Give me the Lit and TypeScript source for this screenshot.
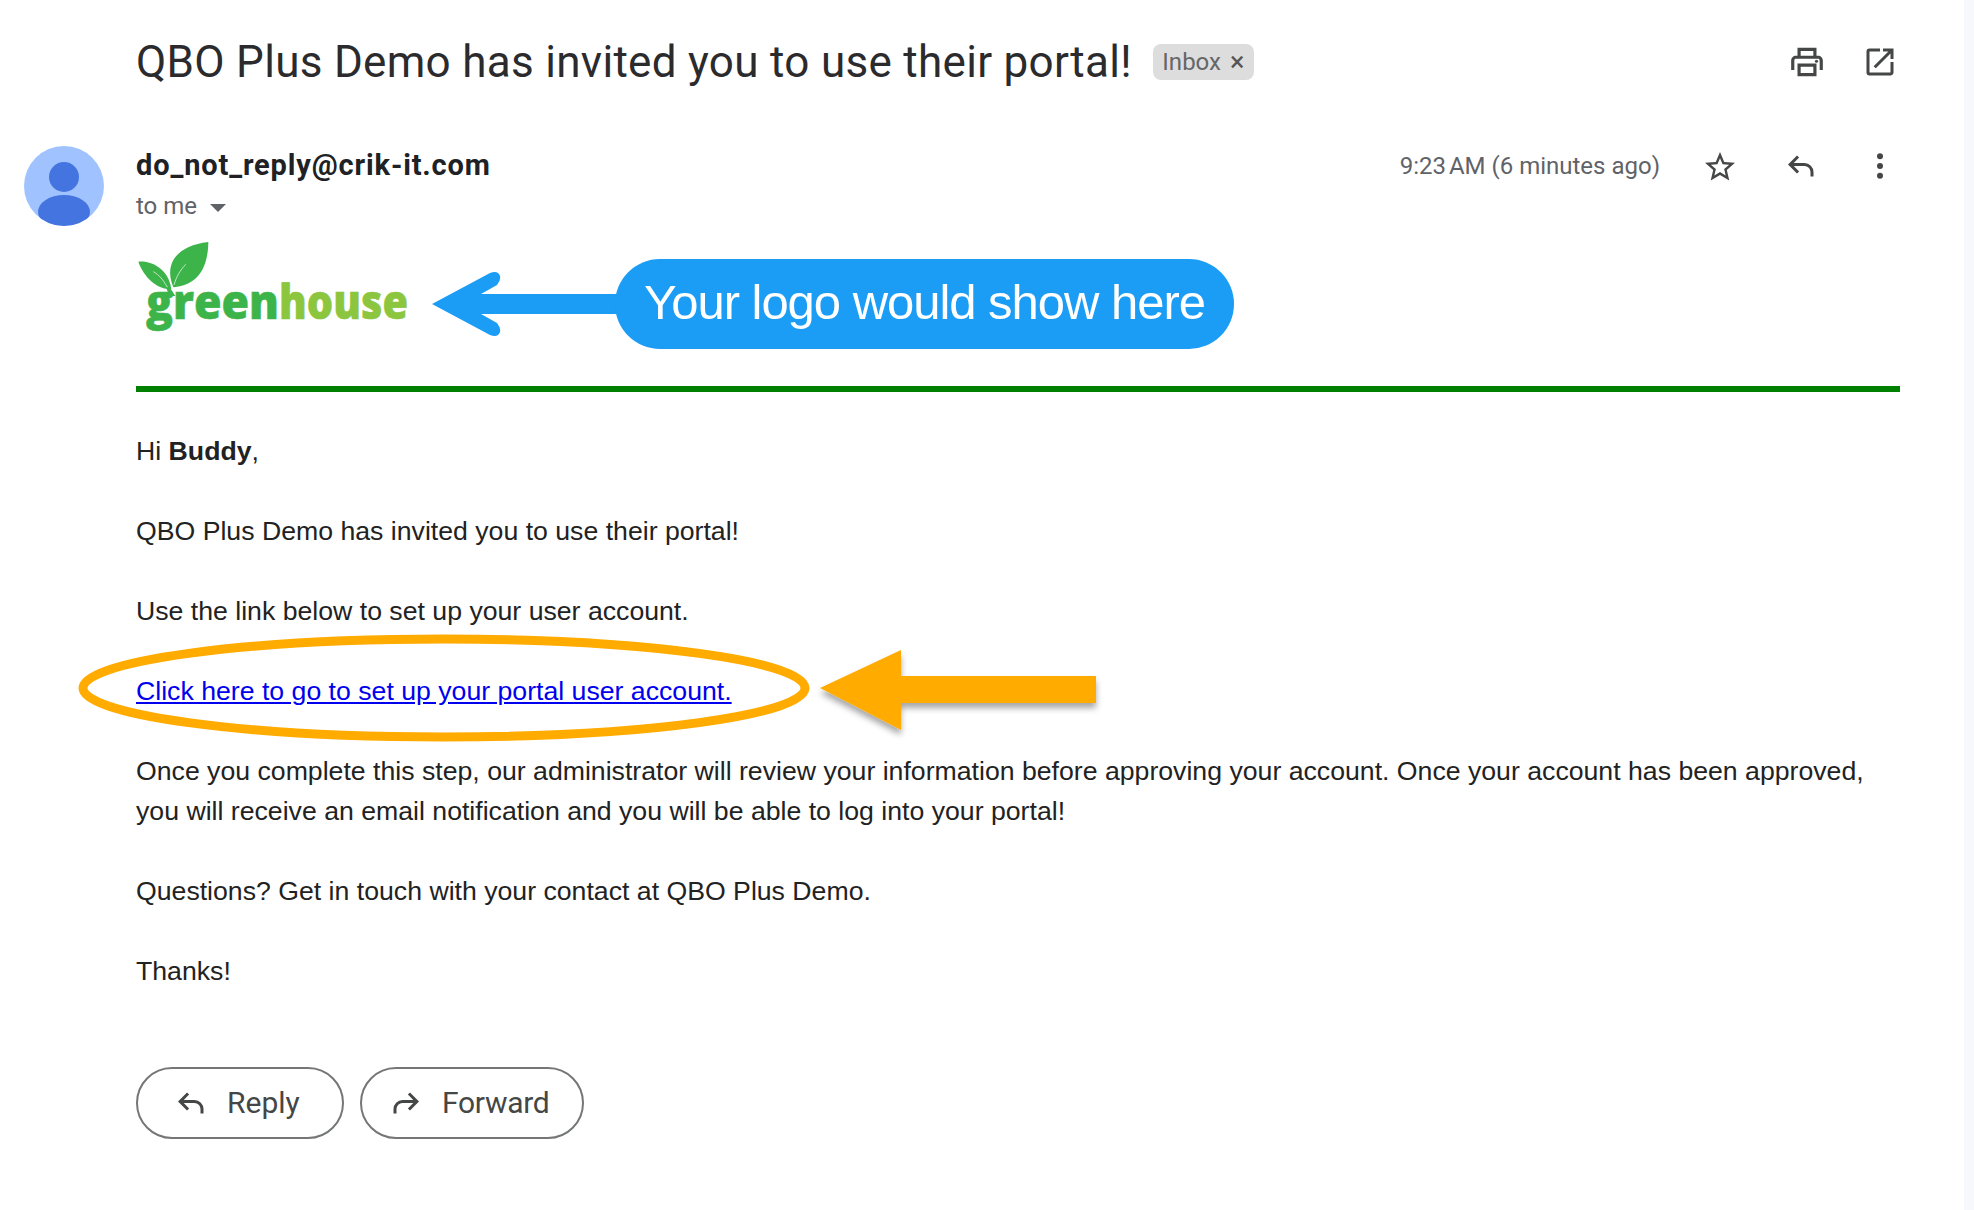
import { LitElement, html, css, svg } from "lit";
import { customElement } from "lit/decorators.js";

const ICON = {
  print: svg`<path d="M19 8h-1V3H6v5H5c-1.66 0-3 1.34-3 3v6h4v4h12v-4h4v-6c0-1.66-1.34-3-3-3zM8 5h8v3H8V5zm8 14H8v-4h8v4zm2-2v-4H6v4H4v-6c0-.55.45-1 1-1h14c.55 0 1 .45 1 1v6h-2z"/><circle cx="18" cy="11.5" r="1"/>`,
  open: svg`<path d="M19 19H5V5h7V3H5a2 2 0 00-2 2v14a2 2 0 002 2h14c1.1 0 2-.9 2-2v-7h-2v7zM14 3v2h3.59l-9.83 9.83 1.41 1.41L19 6.41V10h2V3h-7z"/>`,
  star: svg`<path d="M22 9.24l-7.19-.62L12 2 9.19 8.63 2 9.24l5.46 4.73L5.82 21 12 17.27 18.18 21l-1.63-7.03L22 9.24zM12 15.4l-3.76 2.27 1-4.28-3.32-2.88 4.38-.38L12 6.1l1.71 4.04 4.38.38-3.32 2.88 1 4.28L12 15.4z"/>`,
  reply: svg`<path d="M21 19h-2v-3a4 4 0 00-4-4H7.83l3.58 3.59L10 17l-6-6 6-6 1.41 1.41L7.83 10H15a6 6 0 016 6v3z"/>`,
  forward: svg`<path d="M3 19h2v-3a4 4 0 014-4h7.17l-3.58 3.59L14 17l6-6-6-6-1.41 1.41L16.17 10H9a6 6 0 00-6 6v3z"/>`,
  more: svg`<circle cx="12" cy="5.5" r="2"/><circle cx="12" cy="12" r="2"/><circle cx="12" cy="18.5" r="2"/>`,
};

@customElement("app-root")
export class AppRoot extends LitElement {
  static styles = css`
    :host { display: flex; width: 1974px; height: 1210px; background: #fff; position: relative; overflow: hidden; color: #202124; font-family: Roboto, sans-serif; }
    .main { flex: 1; min-width: 0; padding-left: 136px; padding-right: 64px; position: relative; }
    .gutter { width: 10px; background: #f6f8fc; }
    .title-row { display: flex; align-items: center; height: 124px; }
    h1 { margin: 0; font: 400 44px/48px Roboto, sans-serif; color: #2b2b2d; letter-spacing: 0.3px; white-space: nowrap; }
    .chip { margin-left: 21px; height: 36px; width: 101px; box-sizing: border-box; background: #dddddd; border-radius: 8px; display: flex; align-items: center; justify-content: center; gap: 9px; font-size: 24px; color: #666; }
    .chip-x { font-size: 27px; color: #555; line-height: 24px; }
    .top-icons { margin-left: auto; display: flex; gap: 36px; margin-right: 2px; }
    .ic { display: block; width: 36px; height: 36px; fill: #444746; flex: none; }
    .top-icons .ic:first-child { width: 38px; height: 38px; margin-top: -1px; }
    .sender-row { position: relative; display: flex; height: 92px; }
    .avatar { position: absolute; left: -112px; top: 22px; width: 80px; height: 80px; }
    .who { padding-top: 22px; }
    .from { font: 700 29px/38px Roboto, sans-serif; color: #202124; letter-spacing: .85px; }
    .to { display: flex; align-items: center; gap: 13px; font-size: 24px; line-height: 30px; color: #5f6368; margin-top: 7px; }
    .caret { width: 0; height: 0; border-left: 8px solid transparent; border-right: 8px solid transparent; border-top: 8px solid #5f6368; margin-top: 3px; }
    .meta { margin-left: auto; display: flex; align-items: center; height: 38px; margin-top: 23px; margin-right: 2px; }
    .time { font-size: 24px; color: #5f6368; margin-right: 42px; }
    .meta .ic:nth-child(2) { margin-top: 2px; }
    .meta .ic:nth-child(3) { margin-left: 44px; }
    .meta .ic:last-child { margin-left: 44px; }
    .logo { display: block; height: 110px; width: 290px; margin-top: 18px; overflow: visible; }
    .rule { height: 6px; background: #008000; margin-top: 42px; }
    .body { font: 400 26.667px/40px "Liberation Sans", Arial, sans-serif; color: #222; margin-top: 39px; }
    .body p { margin: 0 0 40px; }
    .body a { color: #0000ee; text-decoration: underline; }
    .actions { display: flex; gap: 16px; margin-top: 76px; }
    .btn { height: 72px; box-sizing: border-box; border: 2px solid #747775; border-radius: 36px; display: flex; align-items: center; gap: 19px; padding-left: 34px; padding-bottom: 1px; font-size: 30px; color: #444746; }
    .btn .ic { margin-top: 1px; }
    .btn.reply { width: 208px; }
    .btn.fwd { width: 224px; padding-left: 27px; gap: 17px; letter-spacing: -.3px; }
    .overlay { position: absolute; left: 0; top: 0; width: 1974px; height: 1210px; pointer-events: none; }
    .pill { position: absolute; left: 615px; top: 259px; width: 619px; height: 90px; box-sizing: border-box; padding-bottom: 3px; border-radius: 45px; background: #1b9cf5; color: #fff; display: flex; align-items: center; justify-content: center; font: 400 49px/1 "Liberation Sans", Arial, sans-serif; letter-spacing: -1.03px; }
  `;

  render() {
    const i = (n: keyof typeof ICON) => html`<svg class="ic" viewBox="0 0 24 24">${ICON[n]}</svg>`;
    return html`
      <div class="main">
        <div class="title-row">
          <h1>QBO Plus Demo has invited you to use their portal!</h1>
          <span class="chip">Inbox <span class="chip-x">×</span></span>
          <div class="top-icons">${i("print")}${i("open")}</div>
        </div>
        <div class="sender-row">
          <svg class="avatar" viewBox="0 0 80 80">
            <defs><clipPath id="av"><circle cx="40" cy="40" r="40"/></clipPath></defs>
            <circle cx="40" cy="40" r="40" fill="#a0c3ff"/>
            <g clip-path="url(#av)" fill="#4374e0">
              <circle cx="40" cy="31" r="15"/>
              <ellipse cx="40" cy="66" rx="26" ry="17"/>
            </g>
          </svg>
          <div class="who">
            <div class="from">do_not_reply@crik-it.com</div>
            <div class="to">to me <span class="caret"></span></div>
          </div>
          <div class="meta">
            <span class="time">9:23&#8239;AM (6 minutes ago)</span>
            ${i("star")}${i("reply")}${i("more")}
          </div>
        </div>
        <svg class="logo" viewBox="0 0 290 110">
          <g transform="translate(-16,-4) scale(.3333)">
            <path d="M160 172 C132 105 165 48 265 36 C264 105 240 165 160 172Z" fill="#3cb44a"/>
            <path d="M55 95 C90 92 145 112 154 178 C110 178 72 142 55 95Z" fill="#3cb44a"/>
            <path d="M148 170 L166 198 L148 198 L138 172Z" fill="#3cb44a"/>
            <path d="M162 165 C170 138 180 122 197 103" fill="none" stroke="#bfe6c4" stroke-width="3"/>
            <path d="M100 125 C118 135 130 150 142 172" fill="none" stroke="#bfe6c4" stroke-width="3"/>
          </g>
          <text x="10" y="85" font-family="Open Sans, sans-serif" font-weight="800" font-size="48" fill="#3cb44a" textLength="133" lengthAdjust="spacingAndGlyphs" stroke="#3cb44a" stroke-width=".6">green</text>
          <text x="143" y="85" font-family="Open Sans, sans-serif" font-weight="800" font-size="48" fill="#8cc63f" textLength="129" lengthAdjust="spacingAndGlyphs" stroke="#8cc63f" stroke-width=".6">house</text>
        </svg>
        <div class="rule"></div>
        <div class="body">
          <p>Hi <b>Buddy</b>,</p>
          <p>QBO Plus Demo has invited you to use their portal!</p>
          <p>Use the link below to set up your user account.</p>
          <p><a href="#">Click here to go to set up your portal user account.</a></p>
          <p>Once you complete this step, our administrator will review your information before approving your account. Once your account has been approved, you will receive an email notification and you will be able to log into your portal!</p>
          <p>Questions? Get in touch with your contact at QBO Plus Demo.</p>
          <p>Thanks!</p>
        </div>
        <div class="actions">
          <div class="btn reply">${i("reply")}<span>Reply</span></div>
          <div class="btn fwd">${i("forward")}<span>Forward</span></div>
        </div>
      </div>
      <div class="gutter"></div>
      <svg class="overlay" viewBox="0 0 1974 1210">
        <defs>
          <filter id="sh" x="-20%" y="-20%" width="140%" height="150%"><feDropShadow dx="0" dy="5" stdDeviation="3" flood-color="#000" flood-opacity=".35"/></filter>
        </defs>
        <path d="M432 304 L490 273 Q498 270 500 276 Q501 280 497 285 L481 294 H640 V314 H481 L497 323 Q501 328 500 332 Q498 338 490 335 Z" fill="#1b9cf5"/>
        <ellipse cx="444" cy="688" rx="361" ry="49" fill="none" stroke="#ffab00" stroke-width="9"/>
        <path d="M820 688 L901 650 V676 H1096 V703 H901 V730 Z" fill="#ffab00" filter="url(#sh)"/>
      </svg>
      <div class="pill">Your logo would show here</div>
    `;
  }
}
